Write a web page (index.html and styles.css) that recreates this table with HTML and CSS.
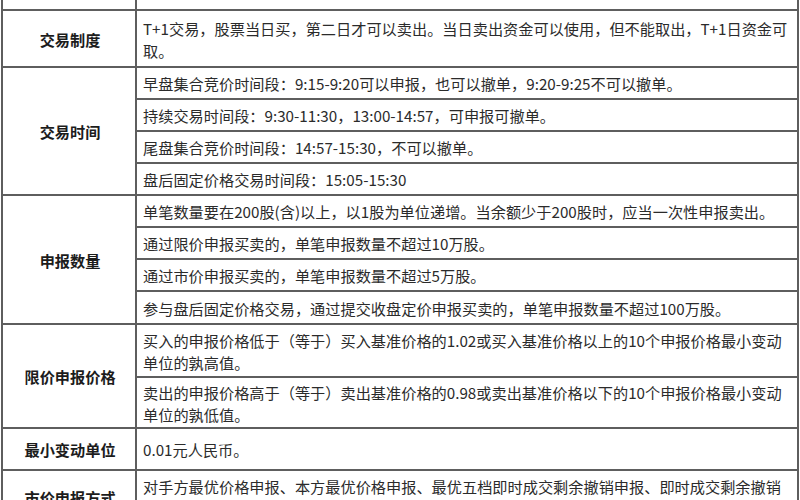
FILE: index.html
```html
<!DOCTYPE html>
<html lang="zh-CN">
<head>
<meta charset="utf-8">
<title>交易规则</title>
<link rel="stylesheet" href="styles.css">
</head>
<body>
<table class="rules">
  <tbody>
    <tr class="r-top"><td class="label"></td><td class="text"></td></tr>
    <tr class="r-57"><td class="label">交易制度</td><td class="text">T+1交易，股票当日买，第二日才可以卖出。当日卖出资金可以使用，但不能取出，T+1日资金可取。</td></tr>
    <tr class="r-32"><td class="label" rowspan="4">交易时间</td><td class="text">早盘集合竞价时间段：9:15-9:20可以申报，也可以撤单，9:20-9:25不可以撤单。</td></tr>
    <tr class="r-32"><td class="text">持续交易时间段：9:30-11:30，13:00-14:57，可申报可撤单。</td></tr>
    <tr class="r-32"><td class="text">尾盘集合竞价时间段：14:57-15:30，不可以撤单。</td></tr>
    <tr class="r-32"><td class="text">盘后固定价格交易时间段：15:05-15:30</td></tr>
    <tr class="r-32"><td class="label" rowspan="4">申报数量</td><td class="text">单笔数量要在200股(含)以上，以1股为单位递增。当余额少于200股时，应当一次性申报卖出。</td></tr>
    <tr class="r-32"><td class="text">通过限价申报买卖的，单笔申报数量不超过10万股。</td></tr>
    <tr class="r-32"><td class="text">通过市价申报买卖的，单笔申报数量不超过5万股。</td></tr>
    <tr class="r-33"><td class="text">参与盘后固定价格交易，通过提交收盘定价申报买卖的，单笔申报数量不超过100万股。</td></tr>
    <tr class="r-53"><td class="label" rowspan="2">限价申报价格</td><td class="text">买入的申报价格低于（等于）买入基准价格的1.02或买入基准价格以上的10个申报价格最小变动单位的孰高值。</td></tr>
    <tr class="r-51"><td class="text">卖出的申报价格高于（等于）卖出基准价格的0.98或卖出基准价格以下的10个申报价格最小变动单位的孰低值。</td></tr>
    <tr class="r-42"><td class="label">最小变动单位</td><td class="text">0.01元人民币。</td></tr>
    <tr class="r-54"><td class="label">市价申报方式</td><td class="text">对手方最优价格申报、本方最优价格申报、最优五档即时成交剩余撤销申报、即时成交剩余撤销申报、全额成交或撤销申报。</td></tr>
  </tbody>
</table>
</body>
</html>
```
FILE: styles.css
```css
html, body {
  margin: 0;
  padding: 0;
  background: #ffffff;
}

body {
  font-family: "Noto Sans CJK SC", "Liberation Sans", sans-serif;
  color: #2b2b2b;
  overflow: hidden;
}

.rules {
  border-collapse: collapse;
  width: 798px;
  margin-left: 1px;
  table-layout: fixed;
}

.rules td {
  border: 2px solid #5e5e5e;
  padding: 0 4px 0 6px;
  vertical-align: middle;
}

.rules .r-top td {
  border-top: none;
  height: 9px;
}

.rules .label {
  width: 122px;
  text-align: center;
  font-weight: bold;
  font-size: 15.2px;
  color: #1c1c1c;
}

.rules .text {
  font-size: 15.2px;
  line-height: 22px;
}

.r-57 td { height: 55px; }
.r-32 td { height: 30px; }
.r-33 td { height: 31px; }
.r-53 td { height: 51px; }
.r-51 td { height: 49px; }
.r-42 td { height: 40px; }
.r-54 td { height: 52px; }
```
